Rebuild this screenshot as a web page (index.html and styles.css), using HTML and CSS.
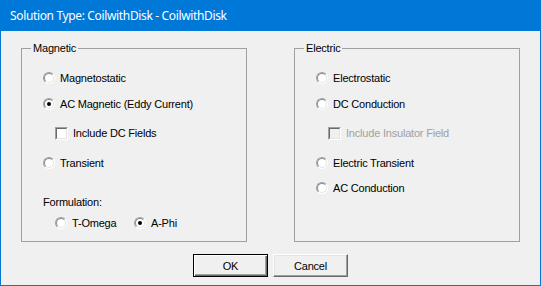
FILE: index.html
```html
<!DOCTYPE html>
<html>
<head>
<meta charset="utf-8">
<link rel="stylesheet" href="styles.css">
</head>
<body>
<div class="window">
  <div class="titlebar">Solution Type: CoilwithDisk - CoilwithDisk</div>
  <div class="client">
    <div class="groups">
      <div class="group">
        <span class="legend">Magnetic</span>
        <div class="row"><span class="radio"></span><span>Magnetostatic</span></div>
        <div class="row mt10"><span class="radio checked"></span><span>AC Magnetic (Eddy Current)</span></div>
        <div class="row sub mt13"><span class="check"></span><span class="cb-label">Include DC Fields</span></div>
        <div class="row mt14"><span class="radio"></span><span>Transient</span></div>
        <div class="row mt23"><span>Formulation:</span></div>
        <div class="row sub mt5">
          <span class="opt"><span class="radio"></span><span>T-Omega</span></span>
          <span class="opt"><span class="radio checked"></span><span>A-Phi</span></span>
        </div>
      </div>
      <div class="group">
        <span class="legend">Electric</span>
        <div class="row"><span class="radio"></span><span>Electrostatic</span></div>
        <div class="row mt10"><span class="radio"></span><span>DC Conduction</span></div>
        <div class="row sub mt13 disabled"><span class="check"></span><span class="cb-label">Include Insulator Field</span></div>
        <div class="row mt14"><span class="radio"></span><span>Electric Transient</span></div>
        <div class="row mt9"><span class="radio"></span><span>AC Conduction</span></div>
      </div>
    </div>
    <div class="buttons">
      <button class="btn default">OK</button>
      <button class="btn">Cancel</button>
    </div>
  </div>
</div>
</body>
</html>
```

FILE: styles.css
```css
html, body {
  margin: 0;
  padding: 0;
  background: #f0f0f0;
}

.window {
  width: 541px;
  height: 286px;
  background: #0078d7;
  box-sizing: border-box;
  font-family: "Liberation Sans", Arial, sans-serif;
  font-size: 11px;
  letter-spacing: -0.2px;
  color: #000;
}

.titlebar {
  height: 31px;
  display: flex;
  align-items: center;
  padding-left: 10px;
  color: #fff;
  font-family: "Noto Sans", "Open Sans", sans-serif;
  font-size: 12px;
  letter-spacing: -0.35px;
}

.client {
  margin: 0 1px;
  height: 254px;
  background: #f0f0f0;
  padding-top: 17px;
  box-sizing: border-box;
}

.groups {
  display: flex;
  gap: 47px;
  padding-left: 20px;
}

.group {
  position: relative;
  width: 226px;
  height: 194px;
  box-sizing: border-box;
  border: 1px solid #a0a0a0;
  padding-top: 21px;
}

.legend {
  position: absolute;
  top: -7px;
  left: 9px;
  padding: 0 2px;
  line-height: 13px;
  background: #f0f0f0;
}

.row {
  display: flex;
  align-items: center;
  height: 16px;
  line-height: 16px;
  margin-left: 21px;
  white-space: nowrap;
}

.row.sub { margin-left: 33px; }

.mt5 { margin-top: 5px; }
.mt9 { margin-top: 9px; }
.mt10 { margin-top: 10px; }
.mt13 { margin-top: 13px; }
.mt14 { margin-top: 14px; }
.mt23 { margin-top: 23px; }

.opt {
  display: flex;
  align-items: center;
}

.opt:first-child { width: 79px; }

.radio {
  position: relative;
  flex: none;
  width: 12px;
  height: 12px;
  margin-right: 5px;
  box-sizing: border-box;
  border-radius: 50%;
  border: 1px solid;
  border-color: #a0a0a0 #ffffff #ffffff #a0a0a0;
  background: #fff;
}

.radio::before {
  content: "";
  position: absolute;
  inset: 0;
  border-radius: 50%;
  border: 1px solid;
  border-color: #8a8a8a #e3e3e3 #e3e3e3 #8a8a8a;
}

.radio.checked::after {
  content: "";
  position: absolute;
  left: 3px;
  top: 3px;
  width: 4px;
  height: 4px;
  border-radius: 50%;
  background: #000;
}

.check {
  position: relative;
  flex: none;
  width: 13px;
  height: 13px;
  margin-right: 5px;
  box-sizing: border-box;
  border: 1px solid;
  border-color: #a0a0a0 #ffffff #ffffff #a0a0a0;
  background: #fff;
}

.check::before {
  content: "";
  position: absolute;
  inset: 0;
  border: 1px solid;
  border-color: #696969 #e3e3e3 #e3e3e3 #696969;
}

.disabled { color: #a0a0a0; }
.disabled .check { background: #f0f0f0; }

.buttons {
  display: flex;
  justify-content: center;
  gap: 5px;
  margin-top: 12px;
}

.btn {
  width: 75px;
  height: 23px;
  box-sizing: border-box;
  margin: 0;
  padding: 0;
  font-family: "Liberation Sans", Arial, sans-serif;
  font-size: 11px;
  letter-spacing: -0.2px;
  color: #000;
  background: #f0f0f0;
  border: 1px solid;
  border-color: #ffffff #696969 #696969 #ffffff;
  box-shadow: inset -1px -1px 0 #a0a0a0, inset 1px 1px 0 #e3e3e3;
  border-radius: 0;
}

.btn.default {
  border-color: #000;
  box-shadow: inset 1px 1px 0 #ffffff, inset -1px -1px 0 #696969, inset -2px -2px 0 #a0a0a0;
}
```
